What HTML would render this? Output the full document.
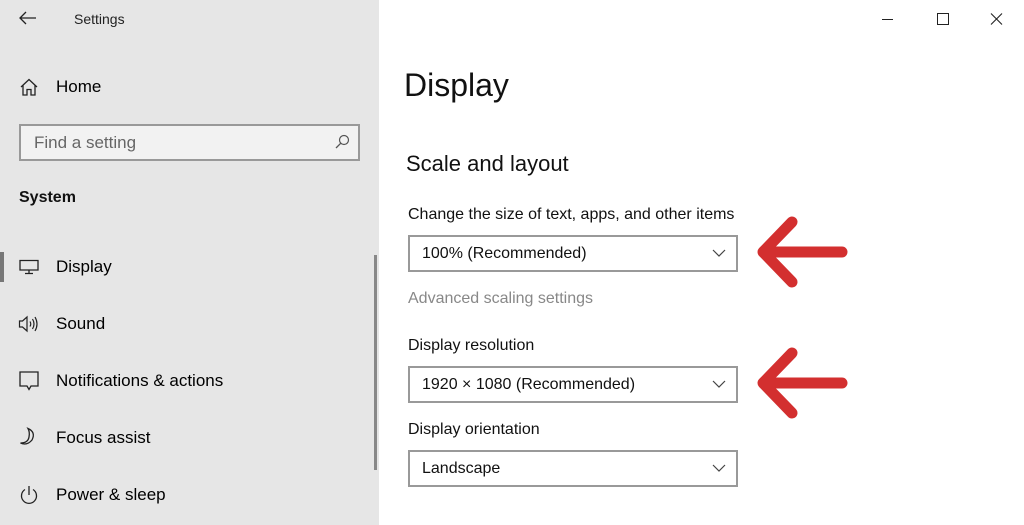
<!DOCTYPE html>
<html><head><meta charset="utf-8"><style>
*{margin:0;padding:0;box-sizing:border-box}
body{width:1024px;height:525px;overflow:hidden;background:#fff;font-family:"Liberation Sans",sans-serif;color:#000;position:relative}
.side{position:absolute;left:0;top:0;width:379px;height:525px;background:#e6e6e6}
.t{position:absolute;white-space:nowrap}
.ic{position:absolute}
.dd{position:absolute;left:408px;width:330px;height:37px;border:2px solid #999;background:#fff}
.dd span{position:absolute;left:12px;top:8px;font-size:16px;color:#111}
.dd svg{position:absolute;right:10px;top:12px}
</style></head><body>
<div class="side">
<svg class="ic" style="left:19px;top:11px" width="18" height="14" viewBox="0 0 18 14"><path d="M1 7H17M7 1L1 7L7 13" fill="none" stroke="#222" stroke-width="1.3"/></svg>
<div class="t" style="left:74px;top:11px;font-size:14px;color:#222">Settings</div>
<svg class="ic" style="left:20px;top:78px" width="18" height="18" viewBox="0 0 18 18"><path d="M1 9L9 1.5L17 9M3 7.5V17H7V11.5H11V17H15V7.5" fill="none" stroke="#222" stroke-width="1.3"/></svg>
<div class="t" style="left:56px;top:77px;font-size:17px">Home</div>
<div style="position:absolute;left:19px;top:124px;width:341px;height:37px;border:2px solid #999;background:#f2f2f2"></div>
<div class="t" style="left:34px;top:133px;font-size:17px;color:#666">Find a setting</div>
<svg class="ic" style="left:334px;top:134px" width="16" height="16" viewBox="0 0 16 16"><circle cx="10" cy="6" r="4.5" fill="none" stroke="#555" stroke-width="1.2"/><path d="M6.8 9.2L2 14" stroke="#555" stroke-width="1.3"/></svg>
<div class="t" style="left:19px;top:189px;font-size:16px;font-weight:bold;color:#111">System</div>
<div style="position:absolute;left:0;top:252px;width:4px;height:30px;background:#777"></div>
<div style="position:absolute;left:374px;top:255px;width:3px;height:215px;background:#888"></div>
<svg class="ic" style="left:19px;top:259px" width="20" height="16" viewBox="0 0 20 16"><path d="M1 1.5H19V11H1ZM10 11V14.5M6 14.5H14" fill="none" stroke="#222" stroke-width="1.3"/></svg>
<div class="t" style="left:56px;top:257px;font-size:17px">Display</div>
<svg class="ic" style="left:18px;top:315px" width="22" height="18" viewBox="0 0 22 18"><path d="M1.5 6H4.5L9 2V16L4.5 12H1.5ZM12 6.5Q13.5 9 12 11.5M14.5 4Q17.5 9 14.5 14M17 2Q21 9 17 16" fill="none" stroke="#222" stroke-width="1.2"/></svg>
<div class="t" style="left:56px;top:314px;font-size:17px">Sound</div>
<svg class="ic" style="left:19px;top:371px" width="20" height="20" viewBox="0 0 20 20"><path d="M1 1H19V15H12L10 18.5L8 15H1Z" fill="none" stroke="#222" stroke-width="1.3"/></svg>
<div class="t" style="left:56px;top:371px;font-size:17px">Notifications &amp; actions</div>
<svg class="ic" style="left:19px;top:427px" width="20" height="20" viewBox="0 0 20 20"><path d="M9 1.5Q17 5 13 13Q8 19 1.5 16Q9 16 10 10Q11 5 9 1.5Z" fill="none" stroke="#222" stroke-width="1.3"/></svg>
<div class="t" style="left:56px;top:428px;font-size:17px">Focus assist</div>
<svg class="ic" style="left:19px;top:485px" width="20" height="20" viewBox="0 0 20 20"><path d="M6 4.5A7.5 7.5 0 1 0 14 4.5M10 1V10" fill="none" stroke="#222" stroke-width="1.3"/></svg>
<div class="t" style="left:56px;top:485px;font-size:17px">Power &amp; sleep</div>
</div>
<svg class="ic" style="left:880px;top:12px" width="125" height="16" viewBox="0 0 125 16"><path d="M2 7.5H13" stroke="#222" stroke-width="1"/><rect x="57.5" y="1.5" width="11" height="11" fill="none" stroke="#222" stroke-width="1"/><path d="M111 1.5L122 12.5M122 1.5L111 12.5" stroke="#222" stroke-width="1.1"/></svg>
<div class="t" style="left:404px;top:67px;font-size:32px;color:#111">Display</div>
<div class="t" style="left:406px;top:151px;font-size:22px;color:#111">Scale and layout</div>
<div class="t" style="left:408px;top:206px;font-size:16px;color:#111">Change the size of text, apps, and other items</div>
<div class="dd" style="top:235px"><span>100% (Recommended)</span><svg width="14" height="9" viewBox="0 0 14 9"><path d="M1 1L7 7L13 1" fill="none" stroke="#444" stroke-width="1.2"/></svg></div>
<div class="t" style="left:408px;top:290px;font-size:16px;color:#888">Advanced scaling settings</div>
<div class="t" style="left:408px;top:337px;font-size:16px;color:#111">Display resolution</div>
<div class="dd" style="top:366px"><span>1920 × 1080 (Recommended)</span><svg width="14" height="9" viewBox="0 0 14 9"><path d="M1 1L7 7L13 1" fill="none" stroke="#444" stroke-width="1.2"/></svg></div>
<div class="t" style="left:408px;top:421px;font-size:16px;color:#111">Display orientation</div>
<div class="dd" style="top:450px"><span>Landscape</span><svg width="14" height="9" viewBox="0 0 14 9"><path d="M1 1L7 7L13 1" fill="none" stroke="#444" stroke-width="1.2"/></svg></div>
<svg class="ic" style="left:750px;top:210px" width="110" height="220" viewBox="0 0 110 220"><g fill="none" stroke="#d32f2f" stroke-width="11" stroke-linecap="round" stroke-linejoin="round"><path d="M92 42H16M42 12L13 42L42 72"/><path d="M92 173H16M42 143L13 173L42 203"/></g></svg>
</body></html>
